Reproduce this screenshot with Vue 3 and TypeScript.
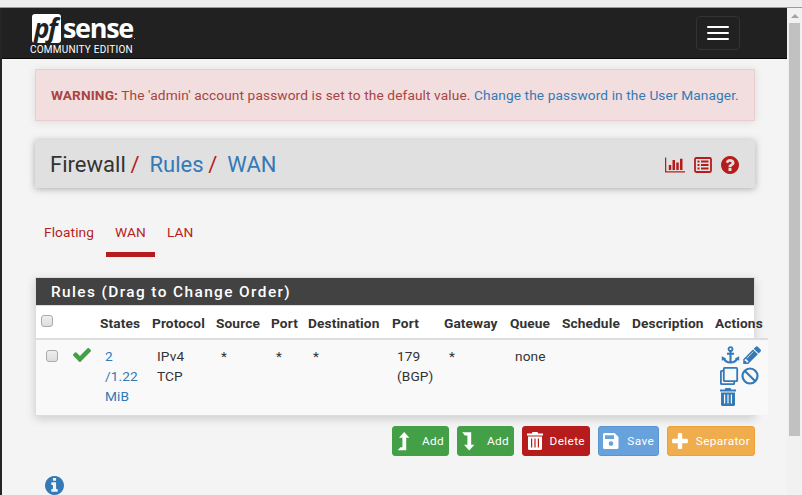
<script setup lang="ts">
interface Column { title: string; lines: string[]; link?: boolean }

const columns: Column[] = [
  { title: 'States', lines: ['2', '/1.22', 'MiB'], link: true },
  { title: 'Protocol', lines: ['IPv4', 'TCP'] },
  { title: 'Source', lines: ['*'] },
  { title: 'Port', lines: ['*'] },
  { title: 'Destination', lines: ['*'] },
  { title: 'Port', lines: ['179', '(BGP)'] },
  { title: 'Gateway', lines: ['*'] },
  { title: 'Queue', lines: ['none'] },
  { title: 'Schedule', lines: [] },
  { title: 'Description', lines: [] },
]
const tabs: string[] = ['Floating', 'WAN', 'LAN']
const activeTab = 'WAN'
</script>

<template>
  <div class="window">
    <div class="chrome"></div>
    <div class="body">
      <main class="page">
        <header class="navbar">
          <div class="brand">
            <div class="logo"><span class="mark"><span class="pf">pf</span></span><span class="sense">sense</span><i class="dot"></i></div>
            <div class="edition">COMMUNITY EDITION</div>
          </div>
          <button class="toggle" aria-label="Menu"><i></i><i></i><i></i></button>
        </header>

        <div class="content">
          <div class="alert"><b>WARNING:</b> The 'admin' account password is set to the default value. <a>Change the password in the User Manager.</a></div>

          <div class="crumbs">
            <div class="trail"><span>Firewall</span><em>/</em><a>Rules</a><em>/</em><a>WAN</a></div>
            <div class="tools">
              <svg width="20" height="18" viewBox="0 0 2048 1792"><path d="M640 896v512h-256v-512h256zm384-512v1024h-256v-1024h256zm1024 1152v128h-2048v-1536h128v1408h1920zm-640-896v768h-256v-768h256zm384-384v1152h-256v-1152h256z" /></svg>
              <svg width="18" height="18" viewBox="0 0 18 18"><rect x="1" y="2" width="16" height="14" rx="1.2" fill="none" stroke="currentColor" stroke-width="1.8" /><path d="M3.5 4.5h2v2h-2zM7 4.5h7.5v2H7zM3.5 8h2v2h-2zM7 8h7.5v2H7zM3.5 11.5h2v2h-2zM7 11.5h7.5v2H7z" /></svg>
              <svg width="18" height="18" viewBox="128 128 1536 1536"><path d="M1024 1376v-192q0-14-9-23t-23-9h-192q-14 0-23 9t-9 23v192q0 14 9 23t23 9h192q14 0 23-9t9-23zm256-672q0-88-55.5-163t-138.5-116-170-41q-243 0-371 213-15 24 8 42l132 100q7 6 19 6 16 0 25-12 53-68 86-92 34-24 86-24 48 0 85.5 26t37.5 59q0 38-20 61t-68 45q-63 28-115.5 86.5t-52.5 125.5v36q0 14 9 23t23 9h192q14 0 23-9t9-23q0-19 21.5-49.5t54.5-49.5q32-18 49-28.5t46-35 44.5-48 28-60.5 12.5-81zm384 192q0 209-103 385.5t-279.5 279.5-385.5 103-385.5-103-279.5-279.5-103-385.5 103-385.5 279.5-279.5 385.5-103 385.5 103 279.5 279.5 103 385.5z" /></svg>
            </div>
          </div>

          <nav class="tabs"><a v-for="tab in tabs" :key="tab" :class="{ active: tab === activeTab }">{{ tab }}</a></nav>

          <section class="panel">
            <h2>Rules (Drag to Change Order)</h2>
            <div class="row head">
              <div class="cell"><span class="check"></span></div>
              <div class="cell"></div>
              <div v-for="(c, i) in columns" :key="i" class="cell">{{ c.title }}</div>
              <div class="cell">Actions</div>
            </div>
            <div class="row data">
              <div class="cell"><span class="check"></span></div>
              <div class="cell pass"><svg width="18" height="14" viewBox="121 334 1550 1188" preserveAspectRatio="none"><path d="M1671 566q0 40-28 68l-724 724-136 136q-28 28-68 28t-68-28l-136-136-362-362q-28-28-28-68t28-68l136-136q28-28 68-28t68 28l294 295 656-657q28-28 68-28t68 28l136 136q28 28 28 68z" /></svg></div>
              <div v-for="(c, i) in columns" :key="i" class="cell" :class="{ link: c.link }"><div v-for="line in c.lines" :key="line">{{ line }}</div></div>
              <div class="cell actions">
                <svg class="anchor" width="19" height="18" viewBox="0 0 19 19" fill="none" stroke="currentColor"><circle cx="9.5" cy="3.2" r="2.1" stroke-width="1.9" /><path d="M9.5 5.4V17M5.8 8.2h7.4" stroke-width="2.2" /><path d="M2.3 12.7c1 2.700 3.500 4.600 7.200 4.600s6.200-1.900 7.200-4.600" stroke-width="2.4" /><path d="M.3 15.500V10.800l4.500 2.400zM18.700 15.500V10.800l-4.500 2.400z" fill="currentColor" stroke="none" /></svg>
                <svg width="18" height="18" viewBox="256 128 1410 1536"><path d="M491 1536l91-91-235-235-91 91v107h128v128h107zm523-928q0-22-22-22-10 0-17 7l-542 542q-7 7-7 17 0 22 22 22 10 0 17-7l542-542q7-7 7-17zm-54-192l416 416-832 832h-416v-416zm683 96q0 53-37 90l-166 166-416-416 166-165q36-38 90-38 53 0 91 38l235 234q37 39 37 91z" /></svg>
                <svg width="18" height="18" viewBox="0 0 18 18" fill="none" stroke="currentColor" stroke-width="1.8"><rect x="3.800" y=".9" width="13.400" height="13.300" rx=".8" /><path d="M3.800 3.800H1.600Q.9 3.800.9 4.600V16.400Q.9 17.100 1.600 17.100H13.400Q14.200 17.100 14.200 16.400V14.200" /></svg>
                <svg width="18" height="18" viewBox="0 0 18 18" fill="none" stroke="currentColor" stroke-width="2.200"><circle cx="9" cy="9" r="7.500" /><path d="M3.700 3.700L14.300 14.300" /></svg>
                <svg width="16" height="18" viewBox="0 0 16 18"><path fill-rule="evenodd" d="M0 1.600H5V.9Q5 0 6 0H10Q11 0 11 .9V1.600H16V3.400H0zM1 4.500H15V16.500Q15 18 13.500 18H2.500Q1 18 1 16.500zM4 6.500V15.500H5.200V6.500zM7.400 6.500V15.500H8.600V6.500zM10.800 6.500V15.500H12V6.500z" /></svg>
              </div>
            </div>
          </section>

          <div class="buttons">
            <button class="btn green add"><svg width="13" height="19" viewBox="0 0 13 19"><path d="M7.200 0L12.400 5.800H9.200V18.300H.7L3.400 15.200H5.400V5.800H2z" /></svg><span>Add</span></button>
            <button class="btn green add"><svg width="13" height="19" viewBox="0 0 13 19"><path d="M7.200 18.500L12.400 12.700H9.200V.3H.2L2.900 3.400H5.400V12.700H2z" /></svg><span>Add</span></button>
            <button class="btn red"><svg width="16" height="18" viewBox="0 0 16 18"><path fill-rule="evenodd" d="M0 1.600H5V.9Q5 0 6 0H10Q11 0 11 .9V1.600H16V3.400H0zM1 4.500H15V16.500Q15 18 13.500 18H2.500Q1 18 1 16.500zM4 6.500V15.500H5.200V6.500zM7.400 6.500V15.500H8.600V6.500zM10.800 6.500V15.500H12V6.500z" /></svg><span>Delete</span></button>
            <button class="btn blue"><svg width="16" height="16" viewBox="0 0 16 16"><path fill-rule="evenodd" d="M1.500 0H11.500L15.500 4V14.500Q15.500 16 14 16H1.500Q0 16 0 14.500V1.500Q0 0 1.500 0zM2 2.300V6H11V2.300zM8 8.300A2.300 2.300 0 1 0 8 12.900A2.300 2.300 0 1 0 8 8.300z" /></svg><span>Save</span></button>
            <button class="btn orange"><svg width="16" height="16" viewBox="192 128 1408 1408"><path d="M1600 736v192q0 40-28 68t-68 28h-416v416q0 40-28 68t-68 28h-192q-40 0-68-28t-28-68v-416h-416q-40 0-68-28t-28-68v-192q0-40 28-68t68-28h416v-416q0-40 28-68t68-28h192q40 0 68 28t28 68v416h416q40 0 68 28t28 68z" /></svg><span>Separator</span></button>
          </div>

          <div class="info"><svg width="19" height="19" viewBox="128 128 1536 1536"><path d="M1152 1376v-160q0-14-9-23t-23-9h-96v-512q0-14-9-23t-23-9h-320q-14 0-23 9t-9 23v160q0 14 9 23t23 9h96v320h-96q-14 0-23 9t-9 23v160q0 14 9 23t23 9h448q14 0 23-9t9-23zm-128-896v-160q0-14-9-23t-23-9h-192q-14 0-23 9t-9 23v160q0 14 9 23t23 9h192q14 0 23-9t9-23zm640 416q0 209-103 385.500t-279.500 279.500-385.500 103-385.500-103-279.500-279.500-103-385.500 103-385.500 279.500-279.500 385.500-103 385.500 103 279.500 279.500 103 385.500z" /></svg></div>
        </div>
      </main>
      <div class="scrollbar"><span class="arrow"></span><span class="thumb"></span></div>
    </div>
  </div>
</template>

<style>
html, body { margin: 0; overflow: hidden; }
</style>

<style scoped>
* { box-sizing: border-box; }
.window { width: 802px; height: 495px; overflow: hidden; background: #f4f4f4; font: 13.7px/20px Roboto, "Liberation Sans", sans-serif; letter-spacing: .11px; color: #333; }
.chrome { height: 8px; background: #ededed; border-bottom: 1px solid #999; }
.body { display: flex; height: 487px; border-left: 2px solid #252525; }
.page { width: 785px; overflow: hidden; }
svg { display: block; fill: currentColor; flex: none; overflow: visible; }
svg[fill="none"] { fill: none; }
a { color: #337ab7; }
.navbar { height: 51px; background: #212121; border-bottom: 1px solid #080808; display: flex; justify-content: space-between; padding: 6px 47px 0 28px; }
.logo { display: flex; height: 30px; padding-left: 2px; }
.mark { width: 29px; height: 29px; background: #fff; border-radius: 3px; color: #212121; }
.pf { display: block; font: italic bold 26px/28px "Open Sans", sans-serif; letter-spacing: -1.5px; margin-left: 2px; white-space: nowrap; }
.sense { font: bold 27px/28px "Open Sans", sans-serif; color: #fff; letter-spacing: -1.3px; margin-left: 2px; margin-top: 0; }
.dot { width: 1px; height: 1px; background: #aaa; margin: 24px 0 0 1px; }
.edition { color: #fff; font-size: 10px; line-height: 12px; letter-spacing: .22px; white-space: nowrap; }
.toggle { width: 44px; height: 34px; margin-top: 2px; background: none; border: 1px solid #333; border-radius: 4px; padding: 0 10px; display: flex; flex-direction: column; justify-content: center; gap: 4px; }
.toggle i { height: 2px; background: #fff; border-radius: 1px; width: 22px; }
.content { padding: 10px 0 0 33px; }
.alert { width: 720px; height: 52px; background: #f2dede; border: 1px solid #ebccd1; box-shadow: 0 1px 8px rgba(0,0,0,.1); padding: 15px; color: #a94442; white-space: nowrap; }
.crumbs { width: 720px; height: 48px; margin-top: 19px; background: #e0e0e0; box-shadow: 0 1px 7px rgba(0,0,0,.3); display: flex; justify-content: space-between; align-items: center; padding: 0 16px 0 15px; }
.trail { display: flex; font-size: 22px; line-height: 28px; letter-spacing: .03px; margin-top: 2px; }
.trail em { font-style: normal; color: #b71c1c; margin: 0 10px 0 4.5px; }
.tools { display: flex; gap: 9px; color: #b71c1c; align-items: center; margin-top: 2px; }
.tabs { display: flex; gap: 3px; margin-top: 34px; height: 35px; }
.tabs a { color: #b71c1c; padding: 0 9px; border-bottom: 5px solid transparent; }
.tabs a.active { border-color: #b71c1c; }
.panel { width: 720px; height: 139px; margin-top: 20px; border: 1px solid #ddd; background: #fff; box-shadow: 0 3px 9px rgba(0,0,0,.16); }
h2 { margin: 0; height: 28px; padding-left: 15px; background: #424242; border-bottom: 1px solid #ddd; color: #fff; font-size: 15.4px; font-weight: 500; line-height: 28px; letter-spacing: 1.4px; }
.row { width: 732px; display: grid; grid-template-columns: 31px 28px 52px 64px 55px 37px 84px 52px 66px 52px 70px 83px 58px; white-space: nowrap; }
.head { height: 34px; border-bottom: 2px solid #ddd; font-weight: 700; line-height: 20px; }
.head .cell { padding: 7px 0 0 5px; }
.data { height: 75px; background: #f9f9f9; }
.data .cell { padding: 6px 0 0 10px; }
.data .link { color: #337ab7; }
.check { display: block; width: 12px; height: 12px; border: 1px solid #aaa; border-radius: 3px; background: linear-gradient(#eee, #ddd); margin-top: 2px; }
.data .check { margin-top: 4px; }
.data .pass { color: #43a047; padding: 8px 0 0 6px; }
.data .actions { display: flex; flex-wrap: wrap; gap: 3px; align-content: flex-start; padding: 6px 4px 0 10px; color: #337ab7; }
.anchor { margin: 0 1px; }
.buttons { display: flex; gap: 8px; justify-content: flex-end; width: 720px; margin-top: 10px; }
.btn { height: 30px; border: 1px solid #43a047; border-radius: 3px; color: #fff; font: 11.8px/18px Roboto, sans-serif; letter-spacing: .36px; display: flex; align-items: center; justify-content: space-between; padding: 0 4px; }
.add { width: 57px; }
.green { background: #43a047; }
.red { width: 68px; background: #b71c1c; border-color: #b71c1c; }
.blue { width: 61px; background: #68a2dd; border-color: #5896d3; }
.orange { width: 88px; background: #f0ad4e; border-color: #eea236; }
.info { margin: 20px 0 0 10px; color: #337ab7; }
.scrollbar { width: 15px; background: #f1f1f1; display: flex; flex-direction: column; align-items: center; }
.arrow { border: 4px solid transparent; border-top: 0; border-bottom-color: #a3a3a3; margin-top: 6px; }
.thumb { width: 11px; height: 413px; margin-top: 5px; background: #c1c1c1; }
</style>
